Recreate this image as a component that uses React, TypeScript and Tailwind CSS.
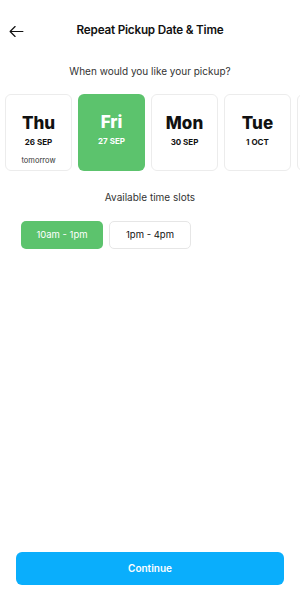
const DAYS = [
  { day: 'Thu', date: '26 SEP', note: 'tomorrow', active: false },
  { day: 'Fri', date: '27 SEP', note: '', active: true },
  { day: 'Mon', date: '30 SEP', note: '', active: false },
  { day: 'Tue', date: '1 OCT', note: '', active: false },
]

const SLOTS = [
  { label: '10am - 1pm', active: true },
  { label: '1pm - 4pm', active: false },
]

export default function App() {
  return (
    <div className="w-[300px] h-[600px] bg-white flex flex-col overflow-hidden" style={{ fontFamily: 'Inter, "Noto Sans", sans-serif' }}>
      {/* header */}
      <div className="relative h-[62px] flex items-center justify-center">
        <button className="absolute left-[8px] top-[23px] text-[#111]">
          <svg className="w-[17px] h-[17px]" viewBox="0 0 24 24" fill="none" stroke="currentColor" strokeWidth={1.7} strokeLinecap="round" strokeLinejoin="round">
            <path d="M21 12H3m0 0l7-7m-7 7l7 7" />
          </svg>
        </button>
        <h1 className="text-[11.7px] font-semibold text-[#111] tracking-[-0.2px]">Repeat Pickup Date &amp; Time</h1>
      </div>

      <p className="text-center text-[10px] text-[#333] mt-[2px]">When would you like your pickup?</p>

      <div className="flex gap-[6px] pl-[5px] mt-[15px] overflow-hidden">
        {DAYS.map(d => (
          <div
            key={d.day}
            className={`shrink-0 w-[67px] h-[77px] rounded-[6px] flex flex-col items-center pt-[17px] ${
              d.active ? 'bg-[#5cc36d] text-white' : 'bg-white border border-[#ececec] text-[#111]'
            }`}
          >
            <div className="text-[17px] font-extrabold leading-[22px]">{d.day}</div>
            <div className="text-[8px] font-bold mt-[2px]">{d.date}</div>
            {d.note && <div className="text-[7.5px] text-[#333] mt-[7px]">{d.note}</div>}
          </div>
        ))}
        {/* next card peeking in at the edge */}
        <div className="shrink-0 w-[67px] h-[77px] rounded-[6px] bg-white border border-[#ececec]" />
      </div>

      <p className="text-center text-[10px] text-[#333] mt-[19px]">Available time slots</p>

      <div className="flex gap-[6px] pl-[21px] mt-[16px]">
        {SLOTS.map(s => (
          <div
            key={s.label}
            className={`w-[82px] h-[28px] rounded-[5px] flex items-center justify-center text-[9.5px] ${
              s.active ? 'bg-[#5cc36d] text-white' : 'bg-white border border-[#e6e6e6] text-[#111]'
            }`}
          >
            {s.label}
          </div>
        ))}
      </div>

      <div className="flex-1" />

      <div className="px-[16px] pb-[15px]">
        <button className="w-full h-[33px] rounded-[6px] bg-[#0aaefc] text-white text-[10px] font-semibold">Continue</button>
      </div>
    </div>
  )
}
